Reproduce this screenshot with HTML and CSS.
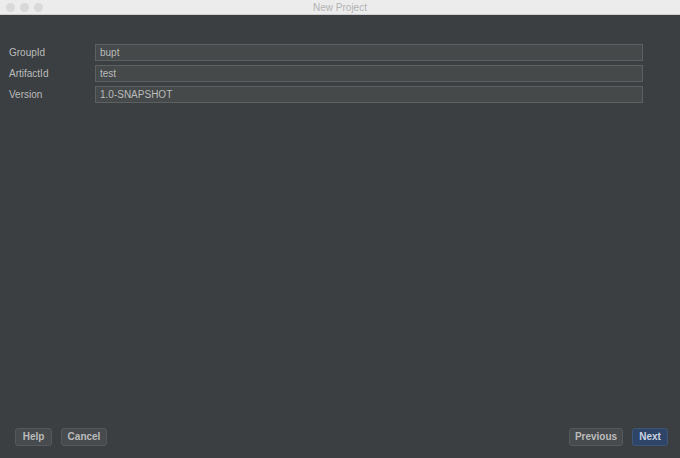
FILE: index.html
```html
<!DOCTYPE html>
<html>
<head>
<meta charset="utf-8">
<link rel="stylesheet" href="styles.css">
</head>
<body>
<div class="window">
  <div class="titlebar">
    <div class="lights"><span class="light"></span><span class="light"></span><span class="light"></span></div>
    <div class="title">New Project</div>
  </div>
  <div class="content">
    <div class="form">
      <label class="label">GroupId</label><div class="field">bupt</div>
      <label class="label">ArtifactId</label><div class="field">test</div>
      <label class="label">Version</label><div class="field">1.0-SNAPSHOT</div>
    </div>
    <div class="buttons">
      <div class="group">
        <div class="btn help">Help</div>
        <div class="btn cancel">Cancel</div>
      </div>
      <div class="group">
        <div class="btn prev">Previous</div>
        <div class="btn next">Next</div>
      </div>
    </div>
  </div>
</div>
</body>
</html>
```
FILE: styles.css
```css
html, body { margin: 0; padding: 0; }
body { width: 680px; height: 458px; overflow: hidden; background: #3c3f41; font-family: "Liberation Sans", Arial, sans-serif; }
.window { display: flex; flex-direction: column; height: 458px; }
.titlebar { height: 14px; background: #ececec; border-bottom: 1px solid #cfcfcf; display: flex; align-items: center; position: relative; }
.lights { display: flex; gap: 5px; padding-left: 6px; }
.light { width: 9px; height: 9px; flex: none; border-radius: 50%; background: #d9d9d9; }
.title { position: absolute; left: 0; right: 0; top: 0; text-align: center; font-size: 10px; line-height: 15px; color: #b3b3b3; }
.content { flex: 1; display: flex; flex-direction: column; justify-content: space-between; padding: 29px 0 12px 0; }
.form { display: grid; grid-template-columns: 86px 1fr; row-gap: 4px; align-items: center; padding: 0 37px 0 9px; }
.label { font-size: 10px; color: #bbbbbb; }
.field { height: 15px; border: 1px solid #5d6061; background: #45494a; color: #bbbbbb; font-size: 10px; line-height: 15px; padding-left: 4px; }
.buttons { display: flex; justify-content: space-between; padding: 0 12px 0 15px; }
.group { display: flex; gap: 9px; }
.btn { height: 16px; border: 1px solid #55595b; border-radius: 3px; background: #474b4d; color: #bbbbbb; font-size: 10px; font-weight: bold; line-height: 16px; text-align: center; }
.help { width: 35px; }
.cancel { width: 44px; }
.prev { width: 52px; }
.next { width: 34px; background: #2f4568; border-color: #3f5577; color: #c9d2e0; }
```
